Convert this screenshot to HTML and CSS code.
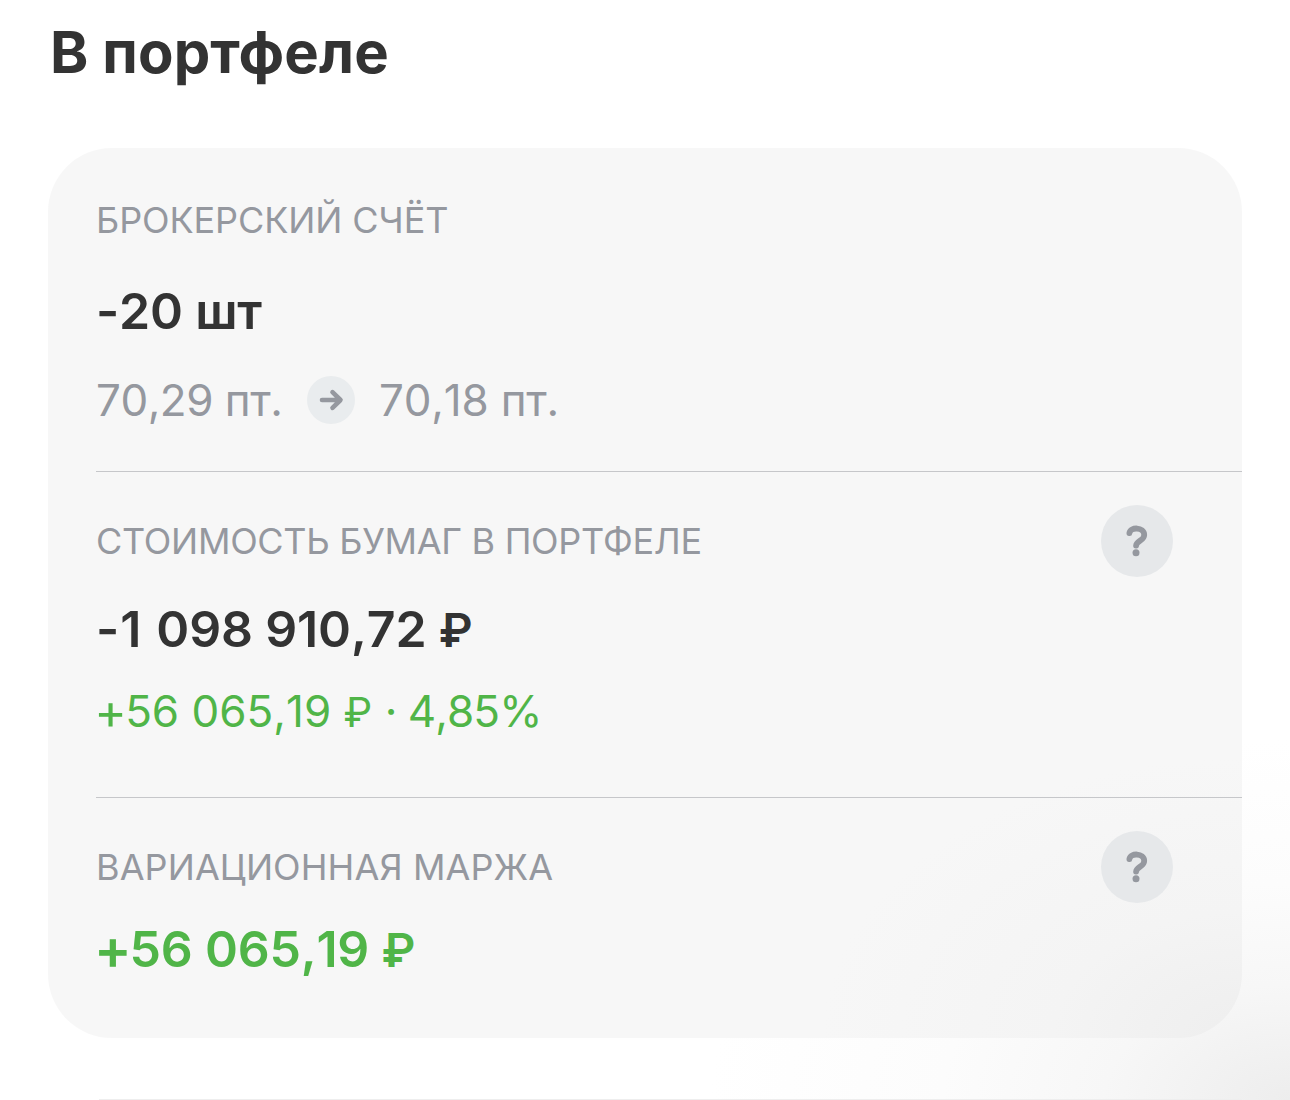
FILE: index.html
```html
<!DOCTYPE html>
<html lang="ru">
<head>
<meta charset="utf-8">
<title>В портфеле</title>
<link rel="stylesheet" href="styles.css">
</head>
<body>
<main class="page">
  <h1 class="title">В портфеле</h1>
  <div class="card">
    <section class="section account">
      <h2 class="label">БРОКЕРСКИЙ СЧЁТ</h2>
      <p class="value quantity">-20 шт</p>
      <div class="prices">
        <span class="price-from">70,29 пт.</span>
        <span class="arrow"><svg width="48" height="48" viewBox="0 0 48 48"><path d="M15 24H33M25.5 16.2L33.5 24L25.5 31.8"/></svg></span>
        <span class="price-to">70,18 пт.</span>
      </div>
    </section>
    <section class="section holdings">
      <div class="heading"><h2 class="label cost-label">СТОИМОСТЬ БУМАГ В ПОРТФЕЛЕ</h2><button class="help" aria-label="Справка"><svg width="72" height="72" viewBox="0 0 72 72"><path d="M28.4 28.1C29.2 21.7 43.2 21.7 43.2 29.9C43.2 35.8 35.4 35.6 35.1 40.6"/><circle cx="35" cy="47.7" r="3.5"/></svg></button></div>
      <p class="value total"><span class="leading">-1 </span>098 910,72 <span class="ruble">₽</span></p>
      <p class="change"><span class="plus">+</span>56 065,19 <span class="ruble">₽</span> · <span class="percent">4,85%</span></p>
    </section>
    <section class="section margin">
      <div class="heading"><h2 class="label margin-label">ВАРИАЦИОННАЯ МАРЖА</h2><button class="help" aria-label="Справка"><svg width="72" height="72" viewBox="0 0 72 72"><path d="M28.4 28.1C29.2 21.7 43.2 21.7 43.2 29.9C43.2 35.8 35.4 35.6 35.1 40.6"/><circle cx="35" cy="47.7" r="3.5"/></svg></button></div>
      <p class="value gain"><span class="plus">+</span>56 065,19 <span class="ruble">₽</span></p>
    </section>
  </div>
  <div class="next-row"></div>
</main>
</body>
</html>
```
FILE: styles.css
```css
* { box-sizing: border-box; }
body { margin: 0; background: #fff; font-family: Inter, sans-serif; font-feature-settings: "calt" 0; color: #333; }
h1, h2, p { margin: 0; }
.page { height: 1100px; padding: 0 48px; overflow: hidden; background: radial-gradient(ellipse 580px 360px at 100% 100%, #ededed, #f7f7f7 32%, #fcfcfc 60%, #fff); }
.title { height: 148px; padding: 16px 0 0 2px; font-size: 58px; line-height: 72px; font-weight: 700; letter-spacing: 0.1px; }
.card { height: 890px; padding-left: 48px; border-radius: 64px; overflow: hidden; background: radial-gradient(ellipse 420px 280px at 100% 100%, #eeeeee, #f4f4f4 45%, #f7f7f7); }
.section { border-bottom: 1px solid #c6c7ca; white-space: nowrap; }
.account { height: 324px; padding-top: 48px; }
.holdings { height: 326px; padding-top: 33px; }
.margin { padding-top: 33px; border: 0; }
.label { font-size: 36px; line-height: 48px; font-weight: 400; letter-spacing: -0.1px; color: #95989f; }
.cost-label { letter-spacing: -0.3px; }
.margin-label { letter-spacing: 0.1px; }
.value { font-size: 50px; line-height: 60px; font-weight: 600; font-kerning: none; }
.quantity { margin-top: 37px; letter-spacing: -0.2px; }
.prices { display: flex; align-items: center; height: 60px; margin-top: 29px; font-size: 44px; font-kerning: none; color: #95989f; }
.price-from { width: 211px; letter-spacing: -0.5px; }
.price-to { letter-spacing: -0.2px; }
.arrow { width: 48px; height: 48px; margin-right: 24px; border-radius: 50%; background: #e9ecee; }
.arrow svg { display: block; fill: none; stroke: #95989f; stroke-width: 4.6; stroke-linecap: round; stroke-linejoin: round; }
.heading { display: flex; align-items: center; justify-content: space-between; height: 72px; padding-right: 69px; }
.help { width: 72px; height: 72px; padding: 0; border: 0; border-radius: 50%; background: #e6e8ea; }
.help svg { display: block; }
.help path { fill: none; stroke: #95989f; stroke-width: 5.8; stroke-linecap: round; }
.help circle { fill: #95989f; }
.ruble { font-size: 0.93em; }
.total { margin-top: 22px; letter-spacing: -0.15px; }
.leading { letter-spacing: 1.1px; }
.plus { display: inline-block; line-height: 1; transform: scale(1.12); }
.percent { letter-spacing: -0.9px; margin-left: -2px; }
.change { margin-top: 21px; font-size: 44px; line-height: 60px; font-kerning: none; color: #50b548; }
.gain { margin-top: 16px; letter-spacing: -0.2px; color: #50b548; }
.next-row { height: 1px; margin: 61px 0 0 51px; background: #eee; }
```
